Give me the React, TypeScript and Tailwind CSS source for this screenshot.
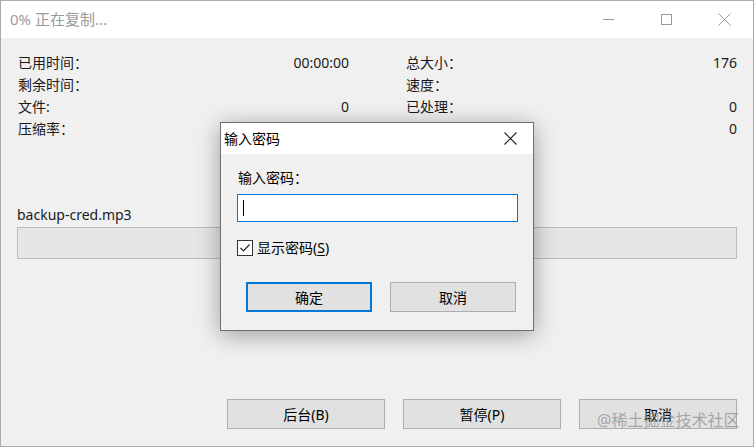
import React from "react";

// ─── Small pieces ─────────────────────────────────────────────────────────────

const FONT = {
  fontFamily: '"Noto Sans", "Noto Sans CJK SC", sans-serif',
};

function InfoRow({ label, value }: { label: string; value?: string }) {
  return (
    <div className="flex h-[22px] items-center justify-between">
      <span>{label}</span>
      <span>{value}</span>
    </div>
  );
}

function WinButton({ children, primary }: { children: React.ReactNode; primary?: boolean }) {
  return (
    <button
      className={
        "flex items-center justify-center bg-[#e1e1e1] text-[14px] text-black " +
        (primary ? "border-2 border-[#0078d7]" : "border border-[#adadad]")
      }
    >
      {children}
    </button>
  );
}

// ─── App ──────────────────────────────────────────────────────────────────────

export default function App() {
  return (
    <div
      className="relative h-[447px] w-[754px] overflow-hidden bg-[#f0f0f0] text-[14px] text-[#1a1a1a]"
      style={FONT}
    >
      {/* ── Copy window ─────────────────────────────────────────────────── */}
      <div className="flex h-full w-full flex-col border border-[#aaaaaa]">
        {/* Title bar */}
        <div className="flex h-[37px] shrink-0 items-center bg-white">
          <span className="pl-[9px] text-[15px] text-[#9a9a9a]">0% 正在复制...</span>
          <div className="ml-auto flex h-full items-center">
            <div className="flex h-full w-[58px] items-center justify-center">
              <div className="h-px w-[11px] bg-[#999]" />
            </div>
            <div className="flex h-full w-[58px] items-center justify-center">
              <div className="h-[11px] w-[11px] border border-[#999]" />
            </div>
            <div className="flex h-full w-[58px] items-center justify-center">
              <svg width="13" height="13" viewBox="0 0 13 13" stroke="#999" strokeWidth="1">
                <line x1="0.5" y1="0.5" x2="12.5" y2="12.5" />
                <line x1="12.5" y1="0.5" x2="0.5" y2="12.5" />
              </svg>
            </div>
          </div>
        </div>

        {/* Body */}
        <div className="flex flex-1 flex-col px-[16px] pt-[13px]">
          <div className="grid grid-cols-2 gap-x-[57px] pl-px">
            <div className="flex flex-col">
              <InfoRow label="已用时间：" value="00:00:00" />
              <InfoRow label="剩余时间：" />
              <InfoRow label="文件:" value="0" />
              <InfoRow label="压缩率：" />
            </div>
            <div className="flex flex-col">
              <InfoRow label="总大小：" value="176" />
              <InfoRow label="速度：" />
              <InfoRow label="已处理：" value="0" />
              <InfoRow label="压缩后大小：" value="0" />
            </div>
          </div>

          <div className="mt-[64px] flex h-[22px] items-center">backup-cred.mp3</div>

          <div className="mt-[2px] h-[32px] border border-[#bcbcbc] bg-[#e6e6e6]" />

          <div className="mt-auto mb-[17px] flex justify-end gap-[18px]">
            <div className="grid h-[30px] w-[158px]">
              <WinButton>后台(B)</WinButton>
            </div>
            <div className="grid h-[30px] w-[158px]">
              <WinButton>暂停(P)</WinButton>
            </div>
            <div className="grid h-[30px] w-[158px]">
              <WinButton>取消</WinButton>
            </div>
          </div>
        </div>
      </div>

      {/* Watermark */}
      <div className="pointer-events-none absolute left-[597px] top-[408px] text-[16px] text-[#8a8a8a]/70">
        @稀土掘金技术社区
      </div>

      {/* ── Password dialog ─────────────────────────────────────────────── */}
      <div className="absolute left-[220px] top-[122px] flex h-[209px] w-[314px] flex-col border border-[#6f6f6f] bg-[#f0f0f0] shadow-[0_4px_22px_rgba(0,0,0,0.35)]">
        <div className="flex h-[31px] shrink-0 items-center bg-white pl-[3px] text-black">
          <span>输入密码</span>
          <div className="ml-auto flex w-[46px] items-center justify-center">
            <svg width="13" height="13" viewBox="0 0 13 13" stroke="#222" strokeWidth="1.1">
              <line x1="0.5" y1="0.5" x2="12.5" y2="12.5" />
              <line x1="12.5" y1="0.5" x2="0.5" y2="12.5" />
            </svg>
          </div>
        </div>

        <div className="flex flex-col pl-[16px] pr-[15px] text-black">
          <div className="mt-[12px] flex h-[22px] items-center pl-px">输入密码：</div>

          <div className="mt-[6px] flex h-[28px] items-center border border-[#0078d7] bg-white pl-[5px]">
            <div className="h-[16px] w-px bg-black" />
          </div>

          <div className="mt-[15px] flex items-center gap-[4px]">
            <div className="flex h-[16px] w-[16px] items-center justify-center border border-[#333] bg-white">
              <svg width="12" height="12" viewBox="0 0 12 12" fill="none" stroke="#222" strokeWidth="1.2">
                <polyline points="1.5,6 4.5,9 10.5,2.5" />
              </svg>
            </div>
            <span>
              显示密码(<span className="underline underline-offset-2">S</span>)
            </span>
          </div>

          <div className="mt-[24px] flex gap-[18px] pl-[9px] pr-px">
            <div className="grid h-[30px] w-[126px]">
              <WinButton primary>确定</WinButton>
            </div>
            <div className="grid h-[30px] w-[126px]">
              <WinButton>取消</WinButton>
            </div>
          </div>
        </div>
      </div>
    </div>
  );
}
